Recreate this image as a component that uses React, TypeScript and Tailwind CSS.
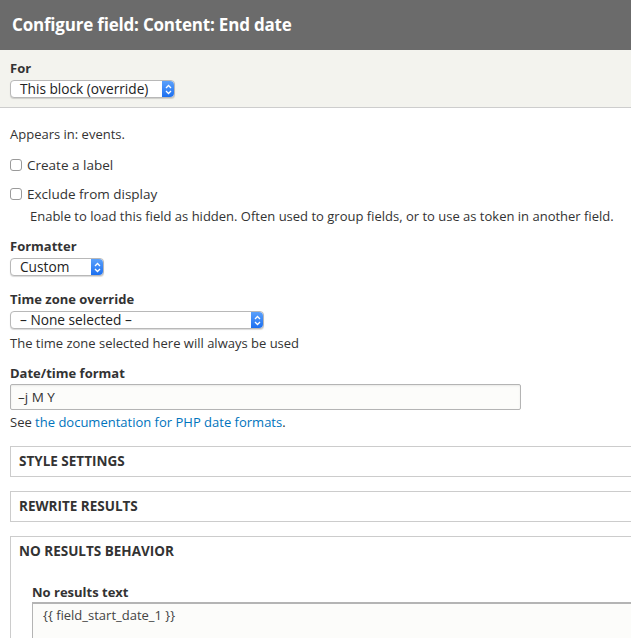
const font = { fontFamily: '"Open Sans", "DejaVu Sans", sans-serif' };

function Stepper() {
  return (
    <span className="flex h-full w-[12px] items-center justify-center rounded-r-[4px] bg-gradient-to-b from-[#5aa0fb] to-[#1a6ff0]">
      <svg width="7" height="11" viewBox="0 0 7 11" fill="none" stroke="white" strokeWidth="1.3">
        <path d="M1 4 L3.5 1.5 L6 4" />
        <path d="M1 7 L3.5 9.5 L6 7" />
      </svg>
    </span>
  );
}

function MacSelect({ value, width }: { value: string; width: string }) {
  return (
    <div className={`flex h-[18px] items-stretch rounded-[4px] border border-[#b8b8b8] bg-white shadow-[0_1px_1px_rgba(0,0,0,0.15)] ${width}`}>
      <span className="flex flex-1 items-center pl-[9px] text-[13.7px] leading-none text-[#222]">{value}</span>
      <Stepper />
    </div>
  );
}

function Checkbox({ label }: { label: string }) {
  return (
    <label className="flex items-center gap-[5px] text-[13.5px] leading-[18px] text-[#333]">
      <span className="h-[12px] w-[12px] rounded-[3px] border border-[#9a9a9a] bg-white" />
      {label}
    </label>
  );
}

function Fieldset({ title, children }: { title: string; children?: React.ReactNode }) {
  return (
    <div className="ml-[10px] border-y border-l border-[#ccc]">
      <div className="flex h-[29px] items-center pl-[8px] text-[13.5px] font-bold uppercase text-[#333]">{title}</div>
      {children}
    </div>
  );
}

export default function App() {
  return (
    <div className="h-[638px] w-[631px] overflow-hidden bg-white" style={font}>
      <div className="flex h-[50px] items-center bg-[#6b6b6b] pl-[12px]">
        <h1 className="text-[17px] font-bold tracking-[-0.2px] text-white">Configure field: Content: End date</h1>
      </div>
      <div className="h-[58px] border-b border-[#cdcdcd] bg-[#f3f3ee] pl-[10px] pt-[9px]">
        <div className="text-[13px] font-bold leading-[18px] text-[#333]">For</div>
        <div className="mt-[3px]">
          <MacSelect value="This block (override)" width="w-[165px]" />
        </div>
      </div>

      <div className="px-[10px]">
        <p className="mt-[18px] text-[13px] leading-[16px] text-[#333]">Appears in: events.</p>
        <div className="mt-[14px]">
          <Checkbox label="Create a label" />
        </div>
        <div className="mt-[11px]">
          <Checkbox label="Exclude from display" />
        </div>
        <p className="mt-[5px] pl-[20px] text-[13px] leading-[16px] text-[#333]">
          Enable to load this field as hidden. Often used to group fields, or to use as token in another field.
        </p>

        <div className="mt-[13px] text-[13px] font-bold leading-[18px] text-[#333]">Formatter</div>
        <div className="mt-[3px]">
          <MacSelect value="Custom" width="w-[94px]" />
        </div>

        <div className="mt-[14px] text-[13px] font-bold leading-[18px] text-[#333]">Time zone override</div>
        <div className="mt-[3px]">
          <MacSelect value="– None selected –" width="w-[254px]" />
        </div>
        <p className="mt-[6px] text-[13px] leading-[16px] text-[#333]">The time zone selected here will always be used</p>

        <div className="mt-[13px] text-[13px] font-bold leading-[18px] text-[#333]">Date/time format</div>
        <div className="mt-[2px] flex h-[26px] w-[511px] items-center rounded-[2px] border border-[#b4b4b4] bg-[#fcfcfa] pl-[7px] text-[13.5px] text-[#333] shadow-[inset_0_1px_2px_rgba(0,0,0,0.08)]">
          –j M Y
        </div>
        <p className="mt-[4px] text-[13px] leading-[16px] text-[#333]">
          See <span className="text-[#0074bd]">the documentation for PHP date formats</span>.
        </p>
      </div>

      <div className="mt-[16px] flex flex-col gap-[14px]">
        <Fieldset title="Style settings" />
        <Fieldset title="Rewrite results" />
        <Fieldset title="No results behavior">
          <div className="pl-[21px] pt-[17px]">
            <div className="text-[13px] font-bold leading-[18px] text-[#333]">No results text</div>
            <div className="mt-[1px] h-[60px] border-t-2 border-l border-[#b4b4b4] bg-[#fcfcfa] pl-[10px] pt-[2px] text-[13px] text-[#444]">
              {'{{ field_start_date_1 }}'}
            </div>
          </div>
        </Fieldset>
      </div>
    </div>
  );
}
